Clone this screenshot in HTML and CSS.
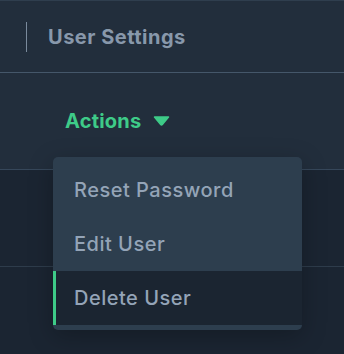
FILE: index.html
```html
<!DOCTYPE html>
<html lang="en">
<head>
  <meta charset="UTF-8" />
  <meta name="viewport" content="width=device-width, initial-scale=1.0" />
  <title>User Settings</title>
  <link rel="stylesheet" href="styles.css">
</head>
<body>
  <header class="topbar">
    <span class="divider"></span>
    <h1>User Settings</h1>
  </header>
  <section class="toolbar">
    <div class="actions">
      <button class="actions-toggle">
        Actions
        <svg width="17" height="10" viewBox="0 0 17 10"><path d="M1.5 1 L15.5 1 L9.3 8.6 Q8.5 9.5 7.7 8.6 Z" fill="#3ecb88" stroke="#3ecb88" stroke-width="1.5" stroke-linejoin="round"/></svg>
      </button>
      <ul class="menu">
        <li>Reset Password</li>
        <li>Edit User</li>
        <li class="active">Delete User</li>
      </ul>
    </div>
  </section>
  <div class="row"></div>
  <div class="row"></div>
</body>
</html>
```

FILE: styles.css
```css
body {
  margin: 0;
  font-family: Inter, "Noto Sans", sans-serif;
  background-color: #1b2532;
  color: #8d9db0;
  height: 354px;
  overflow: hidden;
}

.topbar {
  background-color: #222e3c;
  border-top: 1px solid #2f3e4e;
  border-bottom: 1px solid #45576a;
  display: flex;
  align-items: center;
  padding-left: 26px;
  box-sizing: border-box;
  height: 73px;
}

.divider {
  width: 1px;
  height: 30px;
  background-color: #7a8a9c;
  margin-right: 21px;
}

.topbar h1 {
  margin: 0;
  font-size: 20px;
  font-weight: 700;
  letter-spacing: 0.5px;
  color: #8898ab;
}

.toolbar {
  background-color: #222e3c;
  height: 96px;
  border-bottom: 1px solid #36475a;
  display: flex;
  align-items: center;
  padding-left: 65px;
}

.actions {
  position: relative;
}

.actions-toggle {
  background: none;
  border: none;
  padding: 0;
  font-family: inherit;
  font-size: 20px;
  font-weight: 700;
  letter-spacing: 0.2px;
  color: #3ecb88;
  display: flex;
  align-items: center;
  gap: 12px;
  cursor: pointer;
}

.row {
  height: 96px;
  border-bottom: 1px solid #2e3c4b;
}

.menu {
  position: absolute;
  left: -12px;
  top: 48px;
  width: 249px;
  margin: 0;
  padding: 6px 0 5px;
  list-style: none;
  background-color: #2d3e4e;
  border-radius: 5px;
  box-shadow: 0 6px 24px rgba(0, 0, 0, 0.25);
  z-index: 10;
}

.menu li {
  height: 54px;
  display: flex;
  align-items: center;
  padding-left: 21px;
  font-size: 20px;
  font-weight: 500;
  letter-spacing: 0.5px;
  color: #94a4b7;
  cursor: pointer;
}

.menu li.active {
  background-color: #1b2531;
  border-left: 3px solid #3ecb88;
  padding-left: 18px;
}
```
